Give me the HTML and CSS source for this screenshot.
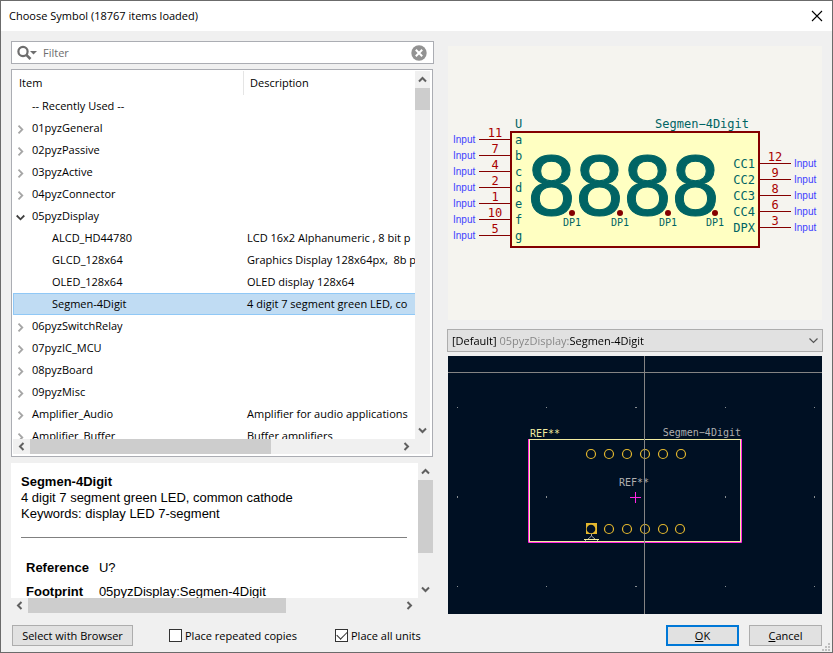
FILE: index.html
```html
<!DOCTYPE html>
<html lang="en">
<head>
<meta charset="utf-8">
<title>Choose Symbol</title>
<link rel="stylesheet" href="styles.css">
</head>
<body>
<svg class="defs" aria-hidden="true">
  <symbol id="arrow" viewBox="0 0 9 9"><path d="M1 6.500 4.500 3 8 6.500" fill="none" stroke="currentColor" stroke-width="2"/></symbol>
  <symbol id="closed" viewBox="0 0 9 9"><path d="M2.500 .7 6.300 4.500 2.500 8.300" fill="none" stroke="#a6a6a6" stroke-width="1.800"/></symbol>
  <symbol id="open" viewBox="0 0 9 9"><path d="M.7 2.500 4.500 6.300 8.300 2.500" fill="none" stroke="#404040" stroke-width="1.800"/></symbol>
</svg>
<div class="window">
  <header class="titlebar">
    <h1>Choose Symbol (18767 items loaded)</h1>
    <button class="close" aria-label="Close"><svg viewBox="0 0 12 12"><path d="M1 1 11 11M11 1 1 11" stroke="#000" stroke-width="1.100"/></svg></button>
  </header>

  <main class="content">
    <section class="left">
      <div class="search">
        <svg class="search-icon" viewBox="0 0 21 16"><circle cx="6" cy="6.500" r="4.600" fill="none" stroke="#6e6e6e" stroke-width="2.200"/><path d="M9.300 9.800 13.500 14" stroke="#6e6e6e" stroke-width="2.600"/><path d="M13 6h7l-3.500 3.500z" fill="#6e6e6e"/></svg>
        <input type="text" placeholder="Filter" aria-label="Filter">
        <button class="clear" aria-label="Clear"><svg viewBox="0 0 16 16"><circle cx="8" cy="8" r="7.700" fill="#929292"/><path d="M4.800 4.800 11.200 11.200M11.200 4.800 4.800 11.200" stroke="#fff" stroke-width="2"/></svg></button>
      </div>

      <div class="tree">
        <div class="rows">
          <table>
            <colgroup><col class="col-item"><col></colgroup>
            <thead><tr><th>Item</th><th>Description</th></tr></thead>
            <tbody>
              <tr><td><span class="toggle"></span>-- Recently Used --</td><td></td></tr>
              <tr><td><svg class="toggle"><use href="#closed"/></svg>01pyzGeneral</td><td></td></tr>
              <tr><td><svg class="toggle"><use href="#closed"/></svg>02pyzPassive</td><td></td></tr>
              <tr><td><svg class="toggle"><use href="#closed"/></svg>03pyzActive</td><td></td></tr>
              <tr><td><svg class="toggle"><use href="#closed"/></svg>04pyzConnector</td><td></td></tr>
              <tr><td><svg class="toggle"><use href="#open"/></svg>05pyzDisplay</td><td></td></tr>
              <tr class="child"><td>ALCD_HD44780</td><td>LCD 16x2 Alphanumeric , 8 bit p</td></tr>
              <tr class="child"><td>GLCD_128x64</td><td>Graphics Display 128x64px,&nbsp; 8b p</td></tr>
              <tr class="child"><td>OLED_128x64</td><td>OLED display 128x64</td></tr>
              <tr class="child selected"><td>Segmen-4Digit</td><td>4 digit 7 segment green LED, co</td></tr>
              <tr><td><svg class="toggle"><use href="#closed"/></svg>06pyzSwitchRelay</td><td></td></tr>
              <tr><td><svg class="toggle"><use href="#closed"/></svg>07pyzIC_MCU</td><td></td></tr>
              <tr><td><svg class="toggle"><use href="#closed"/></svg>08pyzBoard</td><td></td></tr>
              <tr><td><svg class="toggle"><use href="#closed"/></svg>09pyzMisc</td><td></td></tr>
              <tr><td><svg class="toggle"><use href="#closed"/></svg>Amplifier_Audio</td><td>Amplifier for audio applications</td></tr>
              <tr><td><svg class="toggle"><use href="#closed"/></svg>Amplifier_Buffer</td><td>Buffer amplifiers</td></tr>
            </tbody>
          </table>
        </div>
        <div class="bar vertical tree-v">
          <button aria-label="Scroll up"><svg><use href="#arrow"/></svg></button>
          <div class="thumb"></div><div class="rest"></div>
          <button class="down" aria-label="Scroll down"><svg><use href="#arrow"/></svg></button>
        </div>
        <div class="bar tree-h">
          <button class="back" aria-label="Scroll left"><svg><use href="#arrow"/></svg></button>
          <div class="thumb"></div><div class="rest"></div>
          <button class="forward" aria-label="Scroll right"><svg><use href="#arrow"/></svg></button>
        </div>
        <div class="corner"></div>
      </div>

      <div class="details">
        <article>
          <h2>Segmen-4Digit</h2>
          <p>4 digit 7 segment green LED, common cathode</p>
          <p>Keywords: display LED 7-segment</p>
          <hr>
          <table>
            <tr><th>Reference</th><td>U?</td></tr>
            <tr><th>Footprint</th><td>05pyzDisplay:Segmen-4Digit</td></tr>
          </table>
        </article>
        <div class="bar vertical details-v">
          <button aria-label="Scroll up"><svg><use href="#arrow"/></svg></button>
          <div class="thumb"></div><div class="rest"></div>
          <button class="down" aria-label="Scroll down"><svg><use href="#arrow"/></svg></button>
        </div>
        <div class="bar details-h">
          <button class="back" aria-label="Scroll left"><svg><use href="#arrow"/></svg></button>
          <div class="thumb"></div><div class="rest"></div>
          <button class="forward" aria-label="Scroll right"><svg><use href="#arrow"/></svg></button>
        </div>
      </div>
    </section>

    <section class="right">
      <div class="preview symbol">
        <svg viewBox="448 46 374 274" role="img" aria-label="Symbol preview">
          <rect x="511" y="132" width="248" height="115" fill="#ffffc2" stroke="#840000" stroke-width="2"/>
          <path d="M479 139.500h31M479 155.500h31M479 171.500h31M479 187.500h31M479 203.500h31M479 219.500h31M479 235.500h31M760 163.500h31M760 179.500h31M760 195.500h31M760 211.500h31M760 227.500h31" stroke="#840000"/>
          <g class="teal">
            <text class="t12" x="515" y="128">U</text>
            <text class="t12" x="749" y="128" text-anchor="end">Segmen−4Digit</text>
            <text class="digit" y="215" x="526 574 622 670">8888</text>
            <g class="t10">
              <text x="563" y="226">DP1</text><text x="611" y="226">DP1</text><text x="659" y="226">DP1</text><text x="706" y="226">DP1</text>
            </g>
            <g class="t12">
              <text x="515" y="144">a</text><text x="515" y="160">b</text><text x="515" y="176">c</text><text x="515" y="192">d</text><text x="515" y="208">e</text><text x="515" y="224">f</text><text x="515" y="240">g</text>
            </g>
            <g class="t12" text-anchor="end">
              <text x="755" y="168">CC1</text><text x="755" y="184">CC2</text><text x="755" y="200">CC3</text><text x="755" y="216">CC4</text><text x="755" y="232">DPX</text>
            </g>
          </g>
          <g fill="#840000"><circle cx="572" cy="213" r="3"/><circle cx="620" cy="213" r="3"/><circle cx="668" cy="213" r="3"/><circle cx="715" cy="213" r="3"/></g>
          <g class="t12 number" text-anchor="middle">
            <text x="495" y="137">11</text><text x="495" y="153">7</text><text x="495" y="169">4</text><text x="495" y="185">2</text><text x="495" y="201">1</text><text x="495" y="217">10</text><text x="495" y="233">5</text>
            <text x="775" y="161">12</text><text x="775" y="177">9</text><text x="775" y="193">8</text><text x="775" y="209">6</text><text x="775" y="225">3</text>
          </g>
          <g class="kind">
            <text x="453" y="143">Input</text><text x="453" y="159">Input</text><text x="453" y="175">Input</text><text x="453" y="191">Input</text><text x="453" y="207">Input</text><text x="453" y="223">Input</text><text x="453" y="239">Input</text>
            <text x="794" y="167">Input</text><text x="794" y="183">Input</text><text x="794" y="199">Input</text><text x="794" y="215">Input</text><text x="794" y="231">Input</text>
          </g>
        </svg>
      </div>

      <div class="combo">
        <select aria-label="Footprint"><option>[Default] 05pyzDisplay:Segmen-4Digit</option></select>
        <svg viewBox="0 0 9 9"><path d="M.5 2.500 4.500 6.500 8.500 2.500" fill="none" stroke="#555" stroke-width="1.200"/></svg>
      </div>

      <div class="preview footprint">
        <svg viewBox="448 356 374 258" role="img" aria-label="Footprint preview">
          <g fill="#8a8f92">
            <path d="M457 407h1v1h-1zM546 407h1v1h-1zM635 407h2v1h-2zM725 407h1v1h-1zM814 407h1v1h-1zM457 496h1v2h-1zM546 496h1v2h-1zM725 496h1v2h-1zM814 496h1v2h-1zM457 586h1v1h-1zM546 586h1v1h-1zM635 586h2v1h-2zM725 586h1v1h-1zM814 586h1v1h-1z"/>
          </g>
          <path d="M528.500 439v103.500h213V439" fill="none" stroke="#ff26e2"/>
          <rect x="529.500" y="439.500" width="211" height="102" fill="none" stroke="#f2eda1"/>
          <g fill="none" stroke="#e3b72e" stroke-width="1.200">
            <circle cx="591" cy="454" r="4.500"/><circle cx="609" cy="454" r="4.500"/><circle cx="627" cy="454" r="4.500"/><circle cx="645" cy="454" r="4.500"/><circle cx="663" cy="454" r="4.500"/><circle cx="681" cy="454" r="4.500"/>
            <circle cx="609" cy="529" r="4.500"/><circle cx="627" cy="529" r="4.500"/><circle cx="645" cy="529" r="4.500"/><circle cx="663" cy="529" r="4.500"/><circle cx="680" cy="529" r="4.500"/>
          </g>
          <rect x="586" y="523" width="11" height="11" fill="#e3b72e"/>
          <circle cx="591" cy="529" r="4.300" fill="#001023"/>
          <path d="M591.500 534v2l-4 3.500M591.500 536l4 3.500M585.500 541v-1M597.500 541v-1" fill="none" stroke="#afafaf"/>
          <path d="M584 539.500h15" stroke="#f2eda1"/>
          <path d="M630 497.500h11M635.500 492v11" stroke="#ff26e2"/>
          <g class="t10">
            <text x="530" y="437" fill="#f2eda1">REF**</text>
            <text x="741" y="436" text-anchor="end" fill="#afafaf">Segmen−4Digit</text>
            <text x="634" y="486" text-anchor="middle" fill="#afafaf">REF**</text>
          </g>
          <path d="M448 372.500h374M644.500 356v258" stroke="#848484"/>
        </svg>
      </div>
    </section>
  </main>

  <footer class="actions">
    <button class="btn browser">Select with Browser</button>
    <label class="check repeated"><input type="checkbox">Place repeated copies</label>
    <label class="check units"><input type="checkbox" checked>Place all units</label>
    <button class="btn primary"><u>O</u>K</button>
    <button class="btn"><u>C</u>ancel</button>
    <svg class="grip" viewBox="0 0 8 8"><path d="M6 0h2v2H6zM3 3h2v2H3zM6 3h2v2H6zM0 6h2v2H0zM3 6h2v2H3zM6 6h2v2H6z" fill="#bfbfbf"/></svg>
  </footer>
</div>
</body>
</html>
```
FILE: styles.css
```css
* { box-sizing: border-box; }

body {
  margin: 0;
  font: 11px/16px "Open Sans", "Noto Sans", sans-serif;
  color: #000;
}

button, input, select { font: inherit; color: inherit; margin: 0; }
button { padding: 0; border: 0; background: none; }
svg { display: block; }
.defs { position: absolute; width: 0; height: 0; }

.window {
  position: relative;
  display: flex;
  flex-direction: column;
  height: 100vh;
  border: 1px solid #6b6b6b;
  background: #f0f0f0;
}

.titlebar {
  display: flex;
  align-items: center;
  justify-content: space-between;
  height: 30px;
  padding: 0 9px 0 8px;
  background: #fff;
}
.titlebar h1 { margin: 0; font-size: 11px; font-weight: 400; }
.close svg { width: 12px; height: 12px; }

.content {
  flex: 1;
  min-height: 0;
  display: grid;
  grid-template-columns: 423fr 376fr;
  gap: 13px;
  padding: 10px 9px 0 10px;
}
.left, .right { display: flex; flex-direction: column; min-width: 0; min-height: 0; }
.left { padding-bottom: 1px; }

.search {
  display: flex;
  align-items: center;
  height: 23px;
  margin-bottom: 5px;
  padding: 0 6px 0 5px;
  border: 1px solid #abadb3;
  background: #fff;
}
.search-icon { width: 21px; height: 16px; }
.search input {
  flex: 1;
  min-width: 0;
  padding: 0 5px;
  border: 0;
  background: none;
  outline: 0;
}
.search input::placeholder { color: #6d6d6d; opacity: 1; }
.clear svg { width: 16px; height: 16px; }

.tree {
  flex: 383 1 0;
  min-height: 0;
  display: grid;
  grid-template-columns: minmax(0, 1fr) 15px;
  grid-template-rows: minmax(0, 1fr) 15px;
  margin: 0 1px 6px 0;
  padding: 1px 2px 2px 1px;
  border: 1px solid #abadb3;
  background: #fff;
}
.rows { overflow: hidden; }
.rows table { width: 100%; table-layout: fixed; border-collapse: separate; border-spacing: 0; }
.col-item { width: 231px; }
.rows th, .rows td {
  overflow: hidden;
  white-space: nowrap;
  text-align: left;
  font-weight: 400;
}
.rows th { height: 24px; padding: 0 6px; }
.rows th:first-child { border-right: 1px solid #e5e5e5; }
.rows td { height: 22px; padding: 0 0 0 3px; }
.rows .child td:first-child { padding-left: 39px; }
.rows .selected td {
  border: solid #90c8f6;
  border-width: 1px 0;
  background: #c0dcf3;
}
.rows .selected td:first-child { border-left-width: 1px; padding-left: 38px; }
.toggle {
  display: inline-block;
  width: 9px;
  height: 9px;
  margin-right: 7px;
  vertical-align: middle;
}

.bar { display: flex; background: #f0f0f0; color: #606060; }
.bar.vertical { flex-direction: column; }
.bar button { flex: 0 0 17px; display: grid; place-items: center; }
.bar svg { width: 9px; height: 9px; }
.bar .down svg { transform: rotate(180deg); }
.bar .back svg { transform: rotate(-90deg); }
.bar .forward svg { transform: rotate(90deg); }
.thumb { background: #cdcdcd; }
.tree-v .thumb { flex: 22; }
.tree-v .rest { flex: 312; }
.tree-h .thumb { flex: 241; }
.tree-h .rest { flex: 127; }
.details-v .thumb { flex: 73; }
.details-v .rest { flex: 28; }
.details-h .thumb { flex: 258; }
.details-h .rest { flex: 115; }
.corner { background: #f0f0f0; }

.details {
  flex: 150 1 0;
  min-height: 0;
  display: grid;
  grid-template-columns: minmax(0, 1fr) 15px;
  grid-template-rows: minmax(0, 1fr) 15px;
  margin-right: 1px;
}
.details article {
  overflow: hidden;
  padding: 11px 11px 0 10px;
  background: #fff;
  font: 13px/16px "Liberation Sans", Arial, sans-serif;
}
.details h2, .details p { margin: 0; font-size: 13px; white-space: nowrap; }
.details hr { height: 1px; margin: 15px 0 14px; border: 0; background: #808080; }
.details table { border-spacing: 5px 8px; margin: 0; }
.details th, .details td { padding: 0; text-align: left; white-space: nowrap; }
.details th { padding-right: 5px; }

.right { padding-top: 5px; }
.preview { min-height: 0; margin: 0 1px; }
.preview svg { width: 100%; height: 100%; }
.symbol { flex: 274 1 0; background: #f5f4ef; }
.footprint { flex: 258 1 0; background: #001023; }
.preview text { font-family: "DejaVu Sans Mono", monospace; }
.t12 text, text.t12 { font-size: 12px; }
.t10 text { font-size: 10px; }
.teal { fill: #006464; }
.number { fill: #a90000; }
.preview text.digit {
  font-family: "DejaVu Sans", sans-serif;
  font-size: 80px;
  stroke: #006464;
  stroke-width: 1px;
}
.preview .kind text { font-family: "Liberation Sans", sans-serif; font-size: 10px; fill: #4040ff; }

.combo {
  display: flex;
  align-items: center;
  height: 23px;
  margin: 9px 0 4px;
  padding: 0 4px;
  border: 1px solid #adadad;
  background: #e1e1e1;
}
/* The library prefix of the chosen footprint is dimmed. */
.combo select {
  flex: 1;
  min-width: 0;
  padding: 0;
  border: 0;
  appearance: none;
  color: transparent;
  background: linear-gradient(to right, #000 47px, #838383 47px 118px, #000 118px);
  -webkit-background-clip: text;
  background-clip: text;
}
.combo option { color: #000; }
.combo svg { width: 9px; height: 9px; }

.actions {
  display: flex;
  align-items: center;
  gap: 10px;
  padding: 11px 10px 6px 11px;
}
.btn {
  width: 73px;
  height: 21px;
  border: 1px solid #adadad;
  background: #e1e1e1;
}
.btn.browser { width: 121px; }
.btn.primary { margin-left: auto; border: 2px solid #0078d7; }
.check { display: flex; align-items: center; gap: 3px; }
.repeated { margin-left: 26px; }
.units { margin-left: 28px; }
.check input {
  appearance: none;
  width: 13px;
  height: 13px;
  border: 1px solid #333;
  background: #fff;
  display: grid;
  place-items: center;
}
.check input:checked::before {
  content: "";
  width: 9px;
  height: 5px;
  margin-bottom: 3px;
  border: solid #333;
  border-width: 0 0 1px 1px;
  transform: rotate(-45deg);
}
.grip { position: absolute; right: 2px; bottom: 1px; width: 8px; height: 8px; }
```
